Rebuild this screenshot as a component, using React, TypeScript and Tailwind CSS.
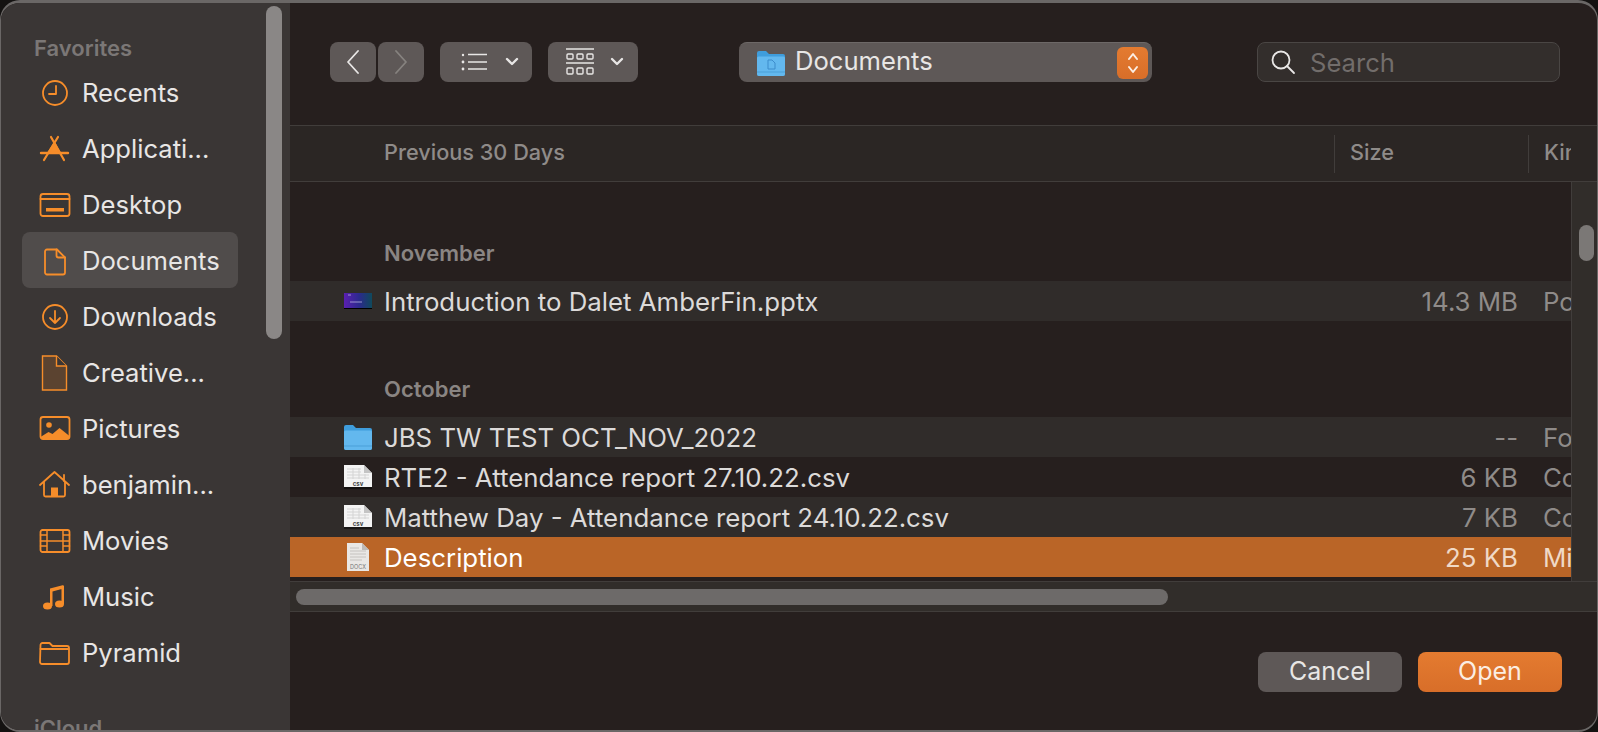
import type { ReactNode } from 'react'

const ORANGE = '#f68d2a'

function Glyph({ children }: { children: ReactNode }) {
  return (
    <svg width="32" height="32" viewBox="0 0 32 32" fill="none" stroke={ORANGE} strokeWidth="1.8" strokeLinecap="round" strokeLinejoin="round">
      {children}
    </svg>
  )
}

const sidebarIcons: Record<string, ReactNode> = {
  recents: (
    <Glyph>
      <circle cx="16" cy="16" r="12" />
      <path d="M17 9v8h-7" />
    </Glyph>
  ),
  apps: (
    <Glyph>
      <path d="M15.5 10L9 20h12z" fill={ORANGE} />
      <path d="M12 4l13 23M19 4L5 27" strokeWidth="2.2" />
      <path d="M2 20h27" strokeWidth="2.4" />
    </Glyph>
  ),
  desktop: (
    <Glyph>
      <rect x="1.5" y="5" width="29" height="22" rx="2.5" />
      <path d="M1.5 10h29" />
      <rect x="7" y="19" width="18" height="3.5" fill={ORANGE} stroke="none" />
    </Glyph>
  ),
  documents: (
    <Glyph>
      <path d="M6 6.5a2 2 0 0 1 2-2h10l8 8v15a2 2 0 0 1-2 2H8a2 2 0 0 1-2-2z" />
      <path d="M17.5 4.5v6a2 2 0 0 0 2 2h6.5" />
    </Glyph>
  ),
  downloads: (
    <Glyph>
      <circle cx="16" cy="16" r="12" />
      <path d="M16 10v12M11 17l5 5 5-5" />
    </Glyph>
  ),
  creative: (
    <svg className="-mt-[2px]" width="32" height="36" viewBox="0 0 32 36" fill="#5b4330" stroke={ORANGE} strokeWidth="1.4">
      <path d="M3.5 1h14l10 10v24h-24z" />
      <path d="M17.5 1v10h10" fill="#3a3635" />
    </svg>
  ),
  pictures: (
    <Glyph>
      <rect x="1.5" y="4" width="29" height="22" rx="2.5" />
      <circle cx="10" cy="12" r="2.8" fill={ORANGE} stroke="none" />
      <path d="M1.5 24l8-5 4 2 7-6 10 8v1a2 2 0 0 1-2 2h-25a2 2 0 0 1-2-2z" fill={ORANGE} stroke="none" />
    </Glyph>
  ),
  home: (
    <Glyph>
      <path d="M1 16L15.5 3 30 16" />
      <path d="M5 13v13a1.5 1.5 0 0 0 1.5 1.5h18A1.5 1.5 0 0 0 26 26V13" />
      <path d="M25 6v6" />
      <rect x="12" y="18.5" width="7" height="9" fill={ORANGE} stroke="none" />
    </Glyph>
  ),
  movies: (
    <Glyph>
      <rect x="1.5" y="5" width="29" height="22" rx="2" />
      <path d="M8 5v22M24 5v22M8 16h16M1.5 10h6.5M1.5 16h6.5M1.5 21h6.5M24 10h6.5M24 16h6.5M24 21h6.5" strokeWidth="1.5" />
    </Glyph>
  ),
  music: (
    <svg width="32" height="32" viewBox="0 0 32 32" fill={ORANGE}>
      <path d="M11 7.5L24.5 4v3.5L13.5 10.5V25h-2.5zM22.5 5h2.5v18h-2.5z" />
      <ellipse cx="8.5" cy="25" rx="4.5" ry="3.6" />
      <ellipse cx="20.5" cy="23" rx="4.5" ry="3.6" />
    </svg>
  ),
  folder: (
    <Glyph>
      <path d="M1.5 8a2 2 0 0 1 2-2h7l3 3h14.5a2 2 0 0 1 2 2v14a2 2 0 0 1-2 2h-25a2 2 0 0 1-2-2z" />
      <path d="M1.5 12h28" />
    </Glyph>
  ),
}

const favorites = [
  { id: 'recents', label: 'Recents' },
  { id: 'apps', label: 'Applicati...' },
  { id: 'desktop', label: 'Desktop' },
  { id: 'documents', label: 'Documents', active: true },
  { id: 'downloads', label: 'Downloads' },
  { id: 'creative', label: 'Creative...' },
  { id: 'pictures', label: 'Pictures' },
  { id: 'home', label: 'benjamin...' },
  { id: 'movies', label: 'Movies' },
  { id: 'music', label: 'Music' },
  { id: 'folder', label: 'Pyramid' },
]

function BlueFolder({ doc }: { doc?: boolean }) {
  return (
    <svg width="28" height="26" viewBox="0 0 28 26">
      <path d="M0 3a2 2 0 0 1 2-2h7l3 3h14a2 2 0 0 1 2 2v18a2 2 0 0 1-2 2H2a2 2 0 0 1-2-2z" fill="#3f9ddc" />
      <path d="M0 8a1.5 1.5 0 0 1 1.5-1.5h25A1.5 1.5 0 0 1 28 8v16a2 2 0 0 1-2 2H2a2 2 0 0 1-2-2z" fill="#63b8ee" />
      <path d="M0 22h28" stroke="#4a9fd8" strokeWidth="1" />
      {doc && <path d="M11 10h4l3 3v6h-7z" fill="none" stroke="#3d8ccb" strokeWidth="1" />}
    </svg>
  )
}

function Thumb() {
  return (
    <svg width="28" height="16" viewBox="0 0 28 16">
      <defs>
        <linearGradient id="pptx" x1="0" y1="0" x2="1" y2="0">
          <stop offset="0" stopColor="#5a1fb0" />
          <stop offset="0.55" stopColor="#2b2a8c" />
          <stop offset="1" stopColor="#0f4a5c" />
        </linearGradient>
      </defs>
      <rect width="28" height="15" fill="url(#pptx)" />
      <path d="M4 2h3M6 9h12" stroke="#c9c4e8" strokeWidth="0.7" />
      <rect y="15" width="28" height="1" fill="#000" />
    </svg>
  )
}

function CsvIcon() {
  return (
    <svg width="28" height="24" viewBox="0 0 28 24">
      <rect x="0" y="22" width="28" height="2" fill="#000" opacity="0.45" />
      <path d="M0 0h20l8 8v14H0z" fill="#f4f4f4" />
      <path d="M20 0v8h8z" fill="#c4c4c4" />
      <path d="M3 4h14M3 7h14M3 10h22M3 13h22M9 3v11M15 3v11M21 9v5" stroke="#d4d4d4" strokeWidth="1" />
      <text x="14" y="20.5" textAnchor="middle" fontSize="6" fontWeight="700" fontFamily="Inter, sans-serif" fill="#444">
        csv
      </text>
    </svg>
  )
}

function DocxIcon() {
  return (
    <svg width="22" height="28" viewBox="0 0 22 28">
      <path d="M0 0h15l7 7v21H0z" fill="#e9e7e5" />
      <path d="M15 0v7h7z" fill="#bdbab7" />
      <path d="M3 5h9M3 8h16M3 11h16M3 14h16M3 17h12" stroke="#c5c2bf" strokeWidth="1" />
      <text x="11" y="26" textAnchor="middle" fontSize="5.5" fontFamily="Inter, sans-serif" fill="#777">
        DOCX
      </text>
    </svg>
  )
}

const font = 'font-["Inter",_"Liberation_Sans",_sans-serif]'

function ToolButton({ children, className }: { children: ReactNode; className: string }) {
  return <div className={`h-10 rounded-lg bg-[#5e5857] flex items-center ${className}`}>{children}</div>
}

function FileRow({ icon, name, size, kind, tone }: { icon: ReactNode; name: string; size: string; kind: string; tone: string }) {
  const selected = tone === 'selected'
  return (
    <div
      className={`h-10 flex items-center text-[25.8px] whitespace-nowrap ${
        selected ? 'bg-[#ba6527] text-white' : tone === 'alt' ? 'bg-[#302c2a] text-[#dcdad9]' : 'text-[#dcdad9]'
      }`}
    >
      <div className="w-[82px] shrink-0 flex justify-end">
        <div className="w-[28px] flex justify-center">{icon}</div>
      </div>
      <div className="ml-[12px] mt-[3px] flex-1">{name}</div>
      <div className={`w-[124px] mt-[3px] text-right ${selected ? 'text-[#f0d9c6]' : 'text-[#8f8b89]'}`}>{size}</div>
      <div className={`ml-[25px] mt-[3px] w-[28px] overflow-hidden ${selected ? 'text-[#f0d9c6]' : 'text-[#8f8b89]'}`}>{kind}</div>
    </div>
  )
}

export default function App() {
  return (
    <div className={`w-[1598px] h-[732px] bg-[#141211] overflow-hidden ${font}`}>
      <div className="relative w-full h-full rounded-[20px] overflow-hidden flex bg-[#261f1e] border-t-[3px] border-x border-b-2 border-[#6a6766]">
        {/* Sidebar */}
        <aside className="relative w-[289px] shrink-0 bg-[#3a3635] overflow-hidden">
          <div className="pt-[32px] px-[21px]">
            <div className="pl-[12px] h-[26px] leading-[26px] text-[22px] font-semibold text-[#7b7776]">Favorites</div>
            <div className="mt-[3px] w-[216px]">
              {favorites.map((f) => (
                <div
                  key={f.id}
                  className={`h-[56px] flex items-center rounded-lg pl-[17px] pt-[2px] ${f.active ? 'bg-[#504c4b]' : ''}`}
                >
                  <div className="w-[32px] h-[32px] shrink-0">{sidebarIcons[f.id]}</div>
                  <span className="ml-[11px] text-[25.6px] text-[#e8e6e5] whitespace-nowrap">{f.label}</span>
                </div>
              ))}
            </div>
            <div className="pl-[12px] mt-[35px] h-[26px] leading-[26px] text-[22px] font-semibold text-[#7b7776]">iCloud</div>
          </div>
          <div className="absolute left-[265px] top-[3px] w-4 h-[333px] rounded-full bg-[#8a8786]" />
        </aside>

        {/* Main */}
        <main className="flex-1 min-w-0 flex flex-col">
          <div className="h-[122px] shrink-0 flex items-start pt-[39px] pl-[40px]">
            <div className="flex gap-[2px]">
              <ToolButton className="w-[46px] justify-center">
                <svg width="16" height="24" viewBox="0 0 16 24" fill="none" stroke="#e8e6e5" strokeWidth="1.8" strokeLinecap="round" strokeLinejoin="round">
                  <path d="M13 1L3 12l10 11" />
                </svg>
              </ToolButton>
              <ToolButton className="w-[46px] justify-center">
                <svg width="16" height="24" viewBox="0 0 16 24" fill="none" stroke="#86827f" strokeWidth="1.8" strokeLinecap="round" strokeLinejoin="round">
                  <path d="M3 1l10 11L3 23" />
                </svg>
              </ToolButton>
            </div>
            <ToolButton className="w-[92px] ml-4 pl-[21px]">
              <svg width="27" height="20" viewBox="0 0 27 20" stroke="#e8e6e5" strokeWidth="1.6" fill="#e8e6e5">
                <circle cx="2" cy="3" r="1.2" stroke="none" />
                <circle cx="2" cy="10" r="1.4" stroke="none" />
                <circle cx="2" cy="17" r="1.4" stroke="none" />
                <path d="M7 2.5h19M7 10h19M7 17h19" />
              </svg>
              <svg className="ml-[17px]" width="14" height="10" viewBox="0 0 14 10" fill="none" stroke="#e8e6e5" strokeWidth="2.4" strokeLinecap="round" strokeLinejoin="round">
                <path d="M2 2l5 5 5-5" />
              </svg>
            </ToolButton>
            <ToolButton className="w-[90px] ml-4 pl-[18px]">
              <svg width="28" height="28" viewBox="0 0 28 28" fill="none" stroke="#e8e6e5" strokeWidth="1.4">
                <path d="M0 1h28M0 15h28" />
                <rect x="1" y="6" width="6" height="5" rx="1" />
                <rect x="11" y="6" width="6" height="5" rx="1" />
                <rect x="21" y="6" width="6" height="5" rx="1" />
                <rect x="1" y="20" width="6" height="6" rx="1" />
                <rect x="11" y="20" width="6" height="6" rx="1" />
                <rect x="21" y="20" width="6" height="6" rx="1" />
              </svg>
              <svg className="ml-[16px]" width="14" height="10" viewBox="0 0 14 10" fill="none" stroke="#e8e6e5" strokeWidth="2.4" strokeLinecap="round" strokeLinejoin="round">
                <path d="M2 2l5 5 5-5" />
              </svg>
            </ToolButton>
            <ToolButton className="w-[413px] ml-[101px] pl-[18px] pr-1 border-t border-[#6d6867]">
              <BlueFolder doc />
              <span className="ml-[10px] -mt-[2px] text-[25.6px] text-[#e8e6e5]">Documents</span>
              <div className="ml-auto w-[31px] h-8 rounded-md bg-gradient-to-b from-[#e47b30] to-[#d86e29] flex items-center justify-center">
                <svg width="14" height="24" viewBox="0 0 14 24" fill="none" stroke="#fbeee3" strokeWidth="2" strokeLinecap="round" strokeLinejoin="round">
                  <path d="M3 8l4-5 4 5M3 16l4 5 4-5" />
                </svg>
              </div>
            </ToolButton>
            <div className="w-[303px] h-10 ml-[105px] rounded-lg bg-[#332e2c] border border-[#4a4644] flex items-center pl-[12px]">
              <svg width="26" height="26" viewBox="0 0 26 26" fill="none" stroke="#e8e6e5" strokeWidth="1.8" strokeLinecap="round">
                <circle cx="11" cy="11" r="8.5" />
                <path d="M17 17l7 7" />
              </svg>
              <span className="ml-[14px] mt-[2px] text-[25.6px] text-[#726d6b]">Search</span>
            </div>
          </div>

          {/* Column header */}
          <div className="h-[57px] shrink-0 flex items-center bg-[#2b2624] border-y border-[#413d3b] text-[21.7px] font-medium text-[#8f8b89] whitespace-nowrap">
            <div className="pl-[94px] flex-1 -mt-[2px]">Previous 30 Days</div>
            <div className="h-[38px] w-[194px] border-l border-[#413d3b] flex items-center pl-[15px] pb-[2px]">Size</div>
            <div className="h-[38px] w-[69px] border-l border-[#413d3b] flex items-center pl-[15px] pb-[2px]">
              <span className="w-[27px] overflow-hidden">Kind</span>
            </div>
          </div>

          {/* File list */}
          <div className="h-[399px] shrink-0 flex">
            <div className="flex-1 min-w-0">
              <div className="h-[49px]" />
              <div className="h-[50px] pt-[6px] pl-[94px] text-[22px] font-semibold text-[#8a8583]">November</div>
              <FileRow icon={<Thumb />} name="Introduction to Dalet AmberFin.pptx" size="14.3 MB" kind="Po" tone="alt" />
              <div className="h-[46px]" />
              <div className="h-[50px] pt-[6px] pl-[94px] text-[22px] font-semibold text-[#8a8583]">October</div>
              <FileRow icon={<BlueFolder />} name="JBS TW TEST OCT_NOV_2022" size="--" kind="Fo" tone="alt" />
              <FileRow icon={<CsvIcon />} name="RTE2 - Attendance report 27.10.22.csv" size="6 KB" kind="Co" tone="plain" />
              <FileRow icon={<CsvIcon />} name="Matthew Day - Attendance report 24.10.22.csv" size="7 KB" kind="Co" tone="alt" />
              <FileRow icon={<DocxIcon />} name="Description" size="25 KB" kind="Mi" tone="selected" />
            </div>
            <div className="w-[26px] shrink-0 bg-[#312d2a] border-l border-[#413d3b] pl-[7px] pt-[43px]">
              <div className="w-[15px] h-[36px] rounded-full bg-[#7b7876]" />
            </div>
          </div>

          {/* Horizontal scroller */}
          <div className="h-[31px] shrink-0 bg-[#312d2a] border-y border-[#413d3b] pl-[6px] pt-[7px]">
            <div className="w-[872px] h-4 rounded-full bg-[#6d6a69]" />
          </div>

          {/* Footer */}
          <div className="flex-1 flex justify-end gap-4 pt-[40px] pr-[35px]">
            <div className="w-[144px] h-10 rounded-lg bg-[#5e5857] flex items-center justify-center text-[25px] text-[#e8e6e5]">Cancel</div>
            <div className="w-[144px] h-10 rounded-lg bg-gradient-to-b from-[#e47b30] to-[#d86e29] flex items-center justify-center text-[25px] text-[#fbeee3]">Open</div>
          </div>
        </main>
      </div>
    </div>
  )
}
